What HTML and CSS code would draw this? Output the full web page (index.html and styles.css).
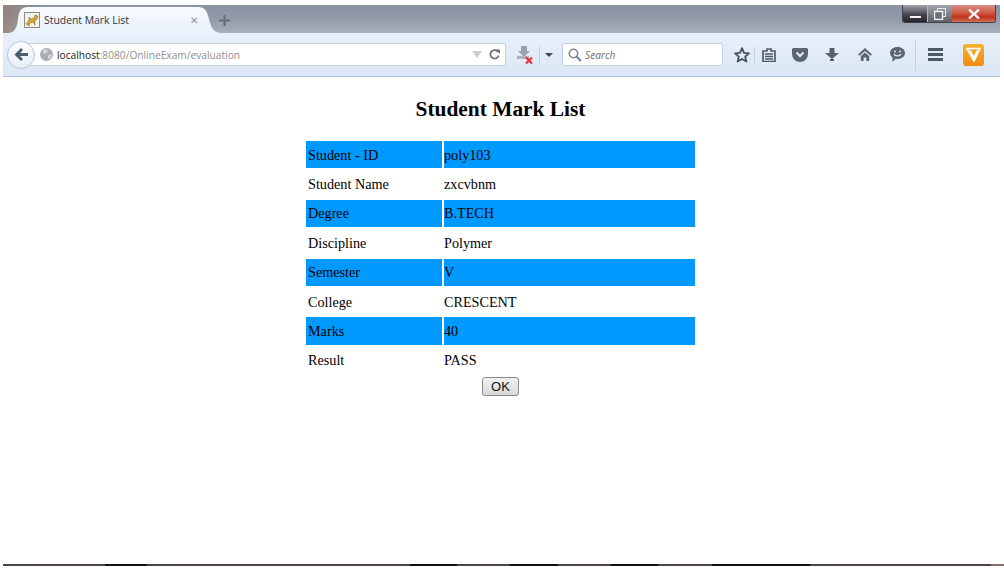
FILE: index.html
```html
<!DOCTYPE html>
<html lang="en">
<head>
  <meta charset="UTF-8" />
  <title>Student Mark List</title>
  <link rel="stylesheet" href="styles.css">
</head>
<body>
  <div class="browser">
    <div class="titlebar">
      <div class="tab">
        <svg class="favicon" width="16" height="16" viewBox="0 0 16 16">
          <rect x="0.5" y="0.5" width="15" height="15" fill="#f4f4ee" stroke="#8a8a80"/>
          <path d="M2 12 L5 8 L5 5 L7 7 L10 6 L11 3 L14 4 L13 7 L11 9 L11 13 L9 10 L6 11 L5 14 Z" fill="#d9a33c" stroke="#7a5a20" stroke-width="0.5"/>
        </svg>
        <span class="tab-title">Student Mark List</span>
        <span class="tab-close">&#10005;</span>
      </div>
      <svg class="new-tab" width="11" height="11" viewBox="0 0 11 11"><path d="M4.5 0h2v4.5H11v2H6.5V11h-2V6.5H0v-2h4.5z" fill="#5f6c7a"/></svg>
      <div class="win-buttons">
        <div class="win-btn win-min"><span class="min-bar"></span></div>
        <div class="win-btn win-max">
          <svg width="12" height="12" viewBox="0 0 12 12"><rect x="3.5" y="0.5" width="8" height="8" fill="none" stroke="#e8e8e8"/><rect x="0.5" y="3.5" width="8" height="8" fill="#6d7278" stroke="#f2f2f2" stroke-width="1.4"/></svg>
        </div>
        <div class="win-btn win-close">
          <svg width="12" height="10" viewBox="0 0 12 10"><path d="M1 0.5 L11 9.5 M11 0.5 L1 9.5" stroke="#f4f0ee" stroke-width="2.4"/></svg>
        </div>
      </div>
    </div>

    <div class="toolbar">
      <div class="back">
        <svg width="14" height="13" viewBox="0 0 14 13"><path d="M7 0 L9 2 L6 5 H14 V8 H6 L9 11 L7 13 L0.5 6.5 Z" fill="#4d5b6a"/></svg>
      </div>
      <div class="urlbar">
        <svg class="globe" width="13" height="13" viewBox="0 0 13 13"><circle cx="6.5" cy="6.5" r="6.5" fill="#a9adb2"/><path d="M3 2 L7 1 L8 4 L5 6 L3 5 Z M8 7 L12 6 L11 10 L8 11 Z" fill="#d4d6d8"/></svg>
        <span class="url"><span class="host">localhost</span>:8080/OnlineExam/evaluation</span>
        <svg class="dropmark" width="10" height="7" viewBox="0 0 10 7"><path d="M0 0H10L5 7Z" fill="#c9ced4"/></svg>
        <svg class="reload" width="11" height="11" viewBox="0 0 11 11"><path d="M9 3 A4.2 4.2 0 1 0 9.6 6.5" fill="none" stroke="#66727f" stroke-width="1.8"/><path d="M6.5 0.5 H11 V5 Z" fill="#66727f"/></svg>
      </div>
      <div class="addon">
        <svg width="17" height="18" viewBox="0 0 17 18"><path d="M4 0H10V5H13L7 11L1 5H4Z" fill="#9aa3ad"/><rect x="0" y="10" width="12" height="3" fill="#aab2ba"/><path d="M9 11.5 L15 17.5 M15 11.5 L9 17.5" stroke="#e8303a" stroke-width="2.2"/></svg>
      </div>
      <span class="sep sep-addon"></span>
      <svg class="caret" width="8" height="4" viewBox="0 0 8 4"><path d="M0 0H8L4 4Z" fill="#3d4650"/></svg>
      <div class="search">
        <svg width="14" height="14" viewBox="0 0 14 14"><circle cx="5.5" cy="5.5" r="4.2" fill="none" stroke="#7d8690" stroke-width="1.6"/><path d="M8.5 8.5 L13 13" stroke="#7d8690" stroke-width="2.2"/></svg>
        <span class="search-text">Search</span>
      </div>
      <svg class="icon star" width="16" height="16" viewBox="0 0 16 16"><path d="M8 1.2 L10 5.9 L15 6.3 L11.2 9.6 L12.4 14.6 L8 12 L3.6 14.6 L4.8 9.6 L1 6.3 L6 5.9 Z" fill="none" stroke="#46525f" stroke-width="1.8" stroke-linejoin="round"/></svg>
      <span class="sep sep-star"></span>
      <svg class="icon list" width="14" height="14" viewBox="0 0 14 14"><path d="M1 3 H5 V1 H9 V3 H13 V13.5 H1 Z" fill="none" stroke="#4f5b68" stroke-width="1.7"/><path d="M3 6H11M3 8.5H11M3 11H11" stroke="#4f5b68" stroke-width="1.3"/></svg>
      <div class="slot slot-pocket">
        <svg width="16" height="14" viewBox="0 0 16 14"><path d="M1.5 0H14.5A1.5 1.5 0 0 1 16 1.5V6A8 8 0 0 1 0 6V1.5A1.5 1.5 0 0 1 1.5 0Z" fill="#5a6673"/><path d="M4.5 4.5L8 8L11.5 4.5" fill="none" stroke="#e3edf8" stroke-width="2"/></svg>
      </div>
      <div class="slot">
        <svg width="14" height="13" viewBox="0 0 14 13"><path d="M4.5 0H9.5V5H14L7 11L0 5H4.5Z" fill="#55616e"/><rect x="5" y="11" width="4" height="2" fill="#55616e"/></svg>
      </div>
      <div class="slot slot-home">
        <svg width="14" height="13" viewBox="0 0 14 13"><path d="M7 0L14 6.5L12.6 7.8L7 3L1.4 7.8L0 6.5Z M2.8 8L7 4.4L11.2 8V13H8.4V9.5H5.6V13H2.8Z" fill="#5a6673"/></svg>
      </div>
      <div class="slot">
        <svg width="15" height="15" viewBox="0 0 15 15"><path d="M7.5 0C11.6 0 15 2.6 15 6S11.6 12 7.5 12C6.9 12 6.3 12 5.8 11.8L2.5 15V10.5C0.9 9.4 0 7.8 0 6C0 2.6 3.4 0 7.5 0Z" fill="#5a6673"/><circle cx="5" cy="4.5" r="1" fill="#e3edf8"/><circle cx="10" cy="4.5" r="1" fill="#e3edf8"/><path d="M4 7C5 9.4 10 9.4 11 7" fill="none" stroke="#e3edf8" stroke-width="1.2"/></svg>
      </div>
      <span class="sep sep-menu"></span>
      <div class="menu"><span></span><span></span><span></span></div>
      <div class="vee">
        <svg width="15" height="15" viewBox="0 0 15 15"><path d="M1 1.5H14L8 14Z M4 3.5L7.8 11L11.5 3.5" fill="none" stroke="#fff" stroke-width="1.7" stroke-linejoin="round"/></svg>
      </div>
    </div>
  </div>

  <div class="content">
    <h2>Student Mark List</h2>
    <table class="marks">
      <tr><td class="label">Student - ID</td><td>poly103</td></tr>
      <tr><td class="label">Student Name</td><td>zxcvbnm</td></tr>
      <tr><td class="label">Degree</td><td>B.TECH</td></tr>
      <tr><td class="label">Discipline</td><td>Polymer</td></tr>
      <tr><td class="label">Semester</td><td>V</td></tr>
      <tr><td class="label">College</td><td>CRESCENT</td></tr>
      <tr><td class="label">Marks</td><td>40</td></tr>
      <tr><td class="label">Result</td><td>PASS</td></tr>
    </table>
    <button class="ok">OK</button>
  </div>

  <div class="bottom-line"></div>
</body>
</html>
```

FILE: styles.css
```css
html, body {
  margin: 0;
  padding: 0;
  height: 570px;
  overflow: hidden;
  background: #ffffff;
}

body {
  display: flex;
  flex-direction: column;
  font-family: "Liberation Serif", serif;
  color: #000000;
}

.browser {
  margin: 5px 4px 0 3px;
  font-family: "Open Sans", "Noto Sans", sans-serif;
}

/* title bar */
.titlebar {
  display: flex;
  align-items: flex-start;
  height: 28px;
  background:
    linear-gradient(90deg, rgba(150, 125, 110, 0.75) 0, rgba(150, 125, 110, 0) 40px),
    linear-gradient(180deg, #8a94a2 0%, #929ba8 50%, #a8b0bb 100%);
}

.tab {
  display: flex;
  align-items: center;
  flex: none;
  width: 214px;
  height: 26px;
  margin: 2px 0 0 5px;
  padding-left: 16px;
  box-sizing: border-box;
  background: linear-gradient(180deg, #f8fafd 0%, #e9f1fa 100%);
  clip-path: path("M0 26 C7 26 9 20 10 12 C11 4 13 0 20 0 H190 C197 0 199 4 201 12 C203 20 205 26 214 26 Z");
}

.favicon {
  flex: none;
}

.tab-title {
  margin-left: 4px;
  font-size: 10.4px;
  color: #2c3440;
  white-space: nowrap;
}

.tab-close {
  margin-left: 61px;
  font-size: 10px;
  font-weight: 700;
  color: #8a939d;
  font-family: "DejaVu Sans", sans-serif;
}

.new-tab {
  margin: 10px 0 0 -3px;
}

.win-buttons {
  display: flex;
  height: 17px;
  margin-left: auto;
  margin-right: 4px;
  border: 1px solid #3f4348;
  border-top: none;
  border-radius: 0 0 3px 3px;
  overflow: hidden;
}

.win-btn {
  display: flex;
  align-items: center;
  justify-content: center;
  box-sizing: border-box;
}

.win-min {
  width: 25px;
  align-items: flex-end;
  padding-bottom: 4px;
  background: linear-gradient(180deg, #a2a4a8 0%, #4a4650 55%, #24222a 100%);
  border-right: 1px solid #b5b8bc;
}

.min-bar {
  display: block;
  width: 11px;
  height: 2px;
  background: #f2f2f2;
}

.win-max {
  width: 24px;
  background: linear-gradient(180deg, #a4a8ac 0%, #7b8086 55%, #5d6268 100%);
}

.win-close {
  width: 43px;
  background: linear-gradient(180deg, #d79088 0%, #cf5a44 45%, #c2331a 70%, #d0705c 100%);
}

/* navigation bar */
.toolbar {
  display: flex;
  align-items: center;
  height: 44px;
  box-sizing: border-box;
  padding-left: 4px;
  background: linear-gradient(180deg, #e8f0fa 0%, #dbe7f5 100%);
  border-bottom: 1px solid #b0c4dc;
  color: #5a6673;
}

.back {
  position: relative;
  z-index: 1;
  display: flex;
  align-items: center;
  justify-content: center;
  flex: none;
  width: 28px;
  height: 28px;
  box-sizing: border-box;
  border: 1px solid #b7c6d8;
  border-radius: 50%;
  background: linear-gradient(180deg, #fbfdff 0%, #e6eef7 100%);
}

.urlbar {
  display: flex;
  align-items: center;
  flex: none;
  width: 477px;
  height: 23px;
  margin-left: -6px;
  padding-left: 10px;
  box-sizing: border-box;
  background: #ffffff;
  border: 1px solid #c3d1e2;
  border-radius: 0 2px 2px 0;
}

.url {
  margin-left: 4px;
  font-size: 10.2px;
  color: #8f8f8f;
  white-space: nowrap;
}

.host {
  color: #1d1d1d;
}

.dropmark {
  margin-left: auto;
  margin-right: 1px;
}

.reload {
  margin: 0 5px 0 6px;
}

.addon {
  display: flex;
  flex: none;
  margin-left: 11px;
}

.sep {
  flex: none;
  width: 1px;
  background: #c5d2e1;
}

.sep-addon {
  height: 18px;
  margin-left: 5px;
}

.caret {
  flex: none;
  margin-left: 5px;
}

.search {
  display: flex;
  align-items: center;
  flex: none;
  width: 161px;
  height: 23px;
  margin-left: 9px;
  padding-left: 5px;
  box-sizing: border-box;
  background: #ffffff;
  border: 1px solid #c3d1e2;
  border-radius: 2px;
}

.search-text {
  margin-left: 3px;
  font-size: 10.2px;
  font-style: italic;
  color: #6f6f6f;
}

.icon {
  flex: none;
}

.star {
  margin-left: 11px;
}

.sep-star {
  height: 16px;
  margin-left: 4px;
}

.list {
  margin-left: 7px;
}

.slot {
  display: flex;
  justify-content: center;
  flex: none;
  width: 32px;
}

.slot-home {
  margin-left: 1px;
}

.slot-pocket {
  margin-left: 8px;
}

.sep-menu {
  height: 32px;
  margin-left: 2px;
}

.menu {
  display: flex;
  flex-direction: column;
  gap: 2px;
  flex: none;
  width: 15px;
  margin-left: 12px;
}

.menu span {
  display: block;
  height: 3px;
  background: #4e5a66;
}

.vee {
  display: flex;
  align-items: center;
  justify-content: center;
  flex: none;
  width: 21px;
  height: 22px;
  margin-left: 20px;
  border-radius: 3px;
  background: linear-gradient(180deg, #f7b32b 0%, #f28a10 100%);
}

/* page */
.content {
  display: flex;
  flex: 1;
  flex-direction: column;
  align-items: center;
  padding-right: 3px;
}

h2 {
  margin: 19px 0 16px;
  font-size: 21.4px;
  line-height: 27px;
  font-weight: 700;
}

.marks {
  width: 393px;
  table-layout: fixed;
  border-spacing: 2px;
  font-size: 14.2px;
}

.marks td {
  height: 27.4px;
  padding: 1px 2px 0;
  box-sizing: border-box;
}

.marks .label {
  width: 136px;
}

.marks tr:nth-child(odd) td {
  background: #0099ff;
}

.marks td + td {
  padding-left: 0;
}

.ok {
  width: 37px;
  height: 19px;
  margin-top: 1px;
  padding: 0;
  font-family: "Liberation Sans", sans-serif;
  font-size: 13px;
  color: #111111;
  background: linear-gradient(180deg, #f2f2f2 0%, #d8d8d8 100%);
  border: 1px solid #8a8a8a;
  border-radius: 3px;
}

.bottom-line {
  height: 2px;
  margin: 0 0 4px 3px;
  background: linear-gradient(90deg,
    #4d4340 0, #4d4340 102px, #111 102px, #111 144px,
    #4d4340 144px, #4d4340 407px, #111 407px, #111 454px,
    #4d4340 454px, #4d4340 507px, #111 507px, #111 555px,
    #4d4340 555px, #4d4340 608px, #111 608px, #111 655px,
    #4d4340 655px, #4d4340 709px, #111 709px, #111 807px,
    #4d4340 807px, #4d4340 988px, #86706f 988px);
}
```
